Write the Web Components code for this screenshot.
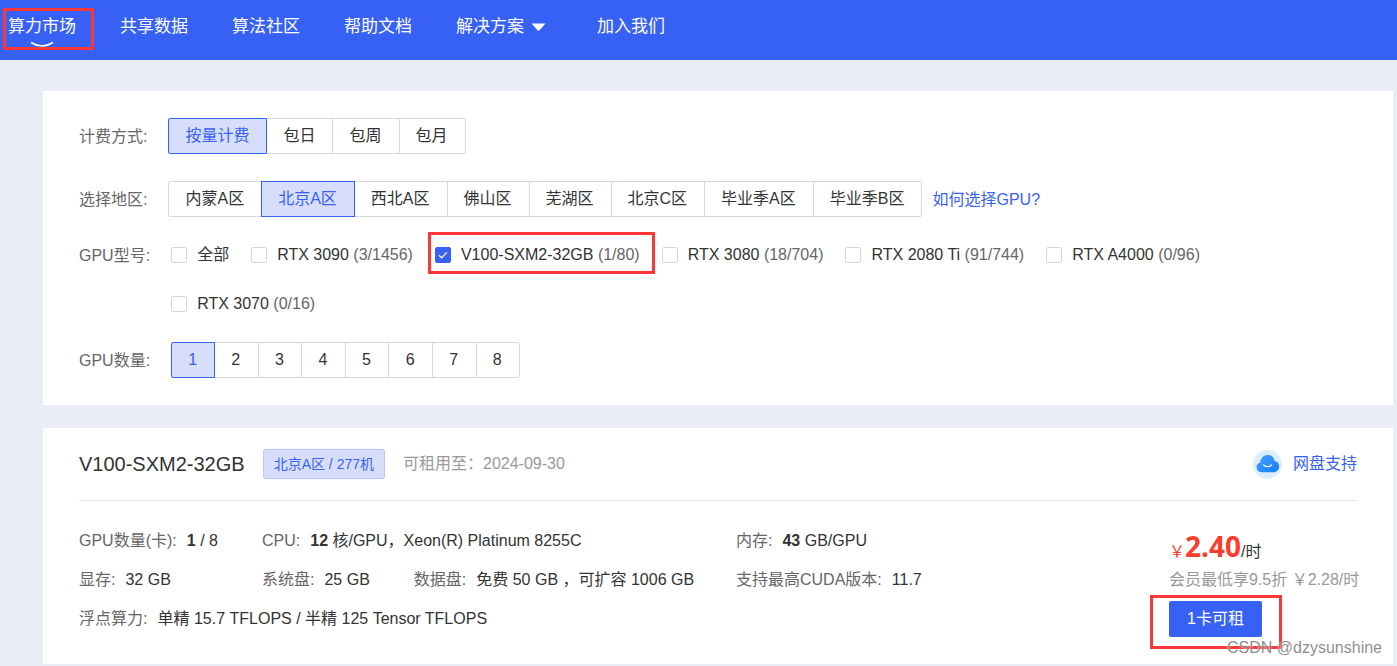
<!DOCTYPE html>
<html lang="zh-CN">
<head>
<meta charset="utf-8">
<title>算力市场</title>
<style>
  :root {
    --primary: #3761f5;
    --primary-soft: #d7defb;
    --line: #d6d8e0;
    --text: #333;
    --label: #666;
    --muted: #999;
    --mark: #fb3737;
  }
  html, body { margin: 0; }
  body {
    position: relative;
    min-height: 100vh;
    background: #eaedf5;
    color: var(--text);
    font: 16px/20px "Liberation Sans", "Noto Sans CJK SC", sans-serif;
  }
  main {
    display: flex;
    flex-direction: column;
    gap: 23px;
    padding: 31px 4px 2px 43px;
  }
</style>
</head>
<body>
<site-header></site-header>
<main>
  <filter-panel></filter-panel>
  <gpu-card></gpu-card>
</main>
<water-mark>CSDN @dzysunshine</water-mark>

<script>
const define = (name, html, setup) => {
  const template = document.createElement('template');
  template.innerHTML = html;
  customElements.define(name, class extends HTMLElement {
    constructor() {
      super();
      this.attachShadow({ mode: 'open' }).append(template.content.cloneNode(true));
    }
    connectedCallback() {
      if (setup && !this.ready) { this.ready = true; setup(this, this.shadowRoot); }
    }
  });
};

/* Red frame drawn around its parent box */
define('mark-frame', `
  <style>
    :host { display: block; position: absolute; box-sizing: border-box; border: 3px solid var(--mark); pointer-events: none; }
  </style>`);

define('nav-item', `
  <style>
    :host { display: block; position: relative; }
    a { display: flex; align-items: center; color: #fff; text-decoration: none; font-size: 17px; line-height: 54px; white-space: nowrap; }
    .caret, .smile { display: none; }
    :host([menu]) .caret { display: block; margin: 0 7px; }
    :host([active]) .smile { display: block; position: absolute; left: calc(50% - 12px); top: 41px; }
  </style>
  <a href="#"><slot></slot><svg class="caret" width="15" height="8" viewBox="0 0 15 8"><path d="M0.5 0.5h14L8.200 7.500q-.7.6-1.400 0z" fill="#fff"/></svg></a>
  <svg class="smile" width="24" height="7" viewBox="0 0 24 7"><path d="M1 1.500Q12 8.500 23 1.500" fill="none" stroke="#fff" stroke-width="1.700"/></svg>
  <slot name="mark"></slot>`);

define('site-header', `
  <style>
    :host { display: block; background: var(--primary); }
    nav { display: flex; gap: 44px; min-height: 60px; padding-left: 8px; align-items: flex-start; }
    mark-frame { inset: 8px -18px 4px -5px; }
  </style>
  <nav>
    <nav-item active>算力市场<mark-frame slot="mark"></mark-frame></nav-item>
    <nav-item>共享数据</nav-item>
    <nav-item>算法社区</nav-item>
    <nav-item>帮助文档</nav-item>
    <nav-item menu>解决方案</nav-item>
    <nav-item>加入我们</nav-item>
  </nav>`);

define('form-row', `
  <style>
    :host { display: flex; align-items: flex-start; }
    .name { flex: none; height: 36px; margin-right: 21px; color: var(--label); line-height: 38px; }
    :host([compact]) .name { height: 22px; line-height: 24px; }
  </style>
  <span class="name"></span><slot></slot>`,
  (el, root) => { root.querySelector('.name').textContent = el.getAttribute('name') + ':'; });

define('segmented-control', `
  <style>
    :host { display: block; }
    .group { display: flex; }
    :host([even]) .group { display: grid; grid-auto-flow: column; grid-auto-columns: 1fr; width: 349px; }
    label {
      position: relative; box-sizing: border-box; height: 36px; line-height: 34px;
      padding: 0 17px 0 16px; border: 1px solid var(--line); background: #fff;
      text-align: center; white-space: nowrap; cursor: pointer;
    }
    label + label { margin-left: -1px; }
    label:first-child { border-radius: 2px 0 0 2px; }
    label:last-child { border-radius: 0 2px 2px 0; }
    label:has(:checked) { z-index: 1; color: var(--primary); background: var(--primary-soft); border-color: var(--primary); }
    input { position: absolute; inset: 0; width: 100%; height: 100%; margin: 0; opacity: 0; cursor: pointer; }
  </style>
  <div class="group" role="radiogroup"></div>`,
  (el, root) => {
    const group = root.querySelector('.group');
    group.setAttribute('aria-label', el.getAttribute('label'));
    el.getAttribute('options').split(',').forEach(text => {
      const label = document.createElement('label');
      const input = document.createElement('input');
      input.type = 'radio';
      input.name = 'choice';
      input.value = text;
      input.checked = text === el.getAttribute('value');
      label.append(input, text);
      group.append(label);
    });
  });

define('check-item', `
  <style>
    :host { display: block; position: relative; }
    label { display: flex; align-items: center; gap: 10px; line-height: 22px; white-space: nowrap; cursor: pointer; }
    .box { display: grid; width: 16px; height: 16px; }
    input, svg { grid-area: 1 / 1; }
    input { appearance: none; box-sizing: border-box; width: 16px; height: 16px; margin: 0; border: 1px solid var(--line); border-radius: 2px; background: #fff; }
    input:checked { background: var(--primary); border-color: var(--primary); }
    svg { visibility: hidden; pointer-events: none; }
    input:checked + svg { visibility: visible; }
    ::slotted(small) { font-size: 16px; color: var(--label); }
  </style>
  <label><span class="box"><input type="checkbox"><svg width="16" height="16" viewBox="0 0 16 16"><path d="M4 8.300l2.600 2.500L12 5.200" fill="none" stroke="#fff" stroke-width="1.200"/></svg></span><span><slot></slot></span></label>
  <slot name="mark"></slot>`,
  (el, root) => { root.querySelector('input').checked = el.hasAttribute('checked'); });

define('filter-panel', `
  <style>
    :host { display: flex; flex-direction: column; gap: 27px; padding: 27px 36px; background: #fff; }
    .checks { display: flex; flex-wrap: wrap; gap: 27px 22px; max-width: 1100px; }
    a { height: 36px; margin-left: 10px; line-height: 38px; color: var(--primary); text-decoration: none; white-space: nowrap; }
    mark-frame { inset: -12px -15px -8px -7px; }
  </style>
  <form-row name="计费方式"><segmented-control label="计费方式" options="按量计费,包日,包周,包月" value="按量计费"></segmented-control></form-row>
  <form-row name="选择地区"><segmented-control label="选择地区" options="内蒙A区,北京A区,西北A区,佛山区,芜湖区,北京C区,毕业季A区,毕业季B区" value="北京A区"></segmented-control><a href="#">如何选择GPU?</a></form-row>
  <form-row name="GPU型号" compact>
    <div class="checks">
      <check-item>全部</check-item>
      <check-item>RTX 3090 <small>(3/1456)</small></check-item>
      <check-item checked>V100-SXM2-32GB <small>(1/80)</small><mark-frame slot="mark"></mark-frame></check-item>
      <check-item>RTX 3080 <small>(18/704)</small></check-item>
      <check-item>RTX 2080 Ti <small>(91/744)</small></check-item>
      <check-item>RTX A4000 <small>(0/96)</small></check-item>
      <check-item>RTX 3070 <small>(0/16)</small></check-item>
    </div>
  </form-row>
  <form-row name="GPU数量"><segmented-control even label="GPU数量" options="1,2,3,4,5,6,7,8" value="1"></segmented-control></form-row>`);

define('spec-item', `
  <style>
    :host { display: flex; gap: 10px; white-space: nowrap; }
    .name { color: var(--label); }
  </style>
  <span class="name"></span><span><slot></slot></span>`,
  (el, root) => { root.querySelector('.name').textContent = el.getAttribute('name') + ':'; });

define('price-box', `
  <style>
    :host { display: block; position: relative; flex: none; width: 188px; white-space: nowrap; }
    .price { display: flex; align-items: baseline; height: 32px; margin-bottom: 8px; line-height: 20px; }
    .yen { color: #fa3e2b; }
    strong { color: #fa3e2b; font: bold 28px/32px "Noto Sans", sans-serif; }
    .member { color: var(--muted); margin-bottom: 11px; }
    .action { position: relative; width: fit-content; }
    button { display: block; height: 36px; padding: 0 18px; border: 0; border-radius: 2px; background: var(--primary); color: #fff; font: inherit; cursor: pointer; }
    mark-frame { inset: -6px -20px -12px -19px; }
  </style>
  <div class="price"><span class="yen">￥</span><strong>2.40</strong><span>/时</span></div>
  <div class="member">会员最低享9.5折 ￥2.28/时</div>
  <div class="action"><button type="button">1卡可租</button><mark-frame></mark-frame></div>`);

define('gpu-card', `
  <style>
    :host { display: block; padding: 0 36px; background: #fff; }
    header { display: flex; align-items: center; gap: 18px; padding: 21px 0; border-bottom: 1px solid #e4e5ea; }
    h2 { margin: 0; font-size: 20px; font-weight: 400; line-height: 30px; }
    .badge { box-sizing: border-box; height: 30px; line-height: 28px; padding: 0 10px; border: 1px solid #b9c8fc; border-radius: 2px; background: var(--primary-soft); color: var(--primary); font-size: 14px; }
    .until { color: var(--muted); }
    .disk { display: flex; align-items: center; gap: 11px; margin-left: auto; color: var(--primary); text-decoration: none; }
    .body { display: flex; padding: 29px 0 27px; }
    .specs { flex: 1; display: grid; grid-template-columns: 183fr 474fr 433fr; gap: 19px 0; align-content: start; padding-top: 1px; }
    .pair { display: flex; gap: 44px; }
    .wide { grid-column: 1 / -1; }
  </style>
  <header>
    <h2>V100-SXM2-32GB</h2>
    <span class="badge">北京A区 / 277机</span>
    <span class="until">可租用至：2024-09-30</span>
    <a class="disk" href="#">
      <svg width="29" height="29" viewBox="0 0 29 29">
        <defs><linearGradient id="cloud" x1="0" y1="0" x2="1" y2="1"><stop offset="0" stop-color="#4ba0ff"/><stop offset="1" stop-color="#147cff"/></linearGradient></defs>
        <circle cx="14.500" cy="14.500" r="14.500" fill="#dceefe"/>
        <path d="M8.500 22.200a5 5 0 0 1-1.300-9.800C7.600 8.300 10.500 5 14.600 5c3.800 0 6.400 2.400 7 6a5.700 5.700 0 0 1-.4 11.200z" fill="url(#cloud)"/>
        <path d="M10.600 14.900q3.900 3.400 7.800 0" fill="none" stroke="#fff" stroke-width="1.300" stroke-linecap="round"/>
      </svg>
      <span>网盘支持</span>
    </a>
  </header>
  <div class="body">
    <div class="specs">
      <spec-item name="GPU数量(卡)"><b>1</b> / 8</spec-item>
      <spec-item name="CPU"><b>12</b> 核/GPU，Xeon(R) Platinum 8255C</spec-item>
      <spec-item name="内存"><b>43</b> GB/GPU</spec-item>
      <spec-item name="显存">32 GB</spec-item>
      <div class="pair"><spec-item name="系统盘">25 GB</spec-item><spec-item name="数据盘">免费 50 GB ，可扩容 1006 GB</spec-item></div>
      <spec-item name="支持最高CUDA版本">11.7</spec-item>
      <spec-item class="wide" name="浮点算力">单精 15.7 TFLOPS / 半精 125 Tensor TFLOPS</spec-item>
    </div>
    <price-box></price-box>
  </div>`);

define('water-mark', `
  <style>
    :host { display: block; position: absolute; right: 15px; bottom: 8px; color: rgba(110, 110, 110, .8); text-shadow: 0 0 2px #fff; pointer-events: none; }
  </style>
  <slot></slot>`);
</script>
</body>
</html>
